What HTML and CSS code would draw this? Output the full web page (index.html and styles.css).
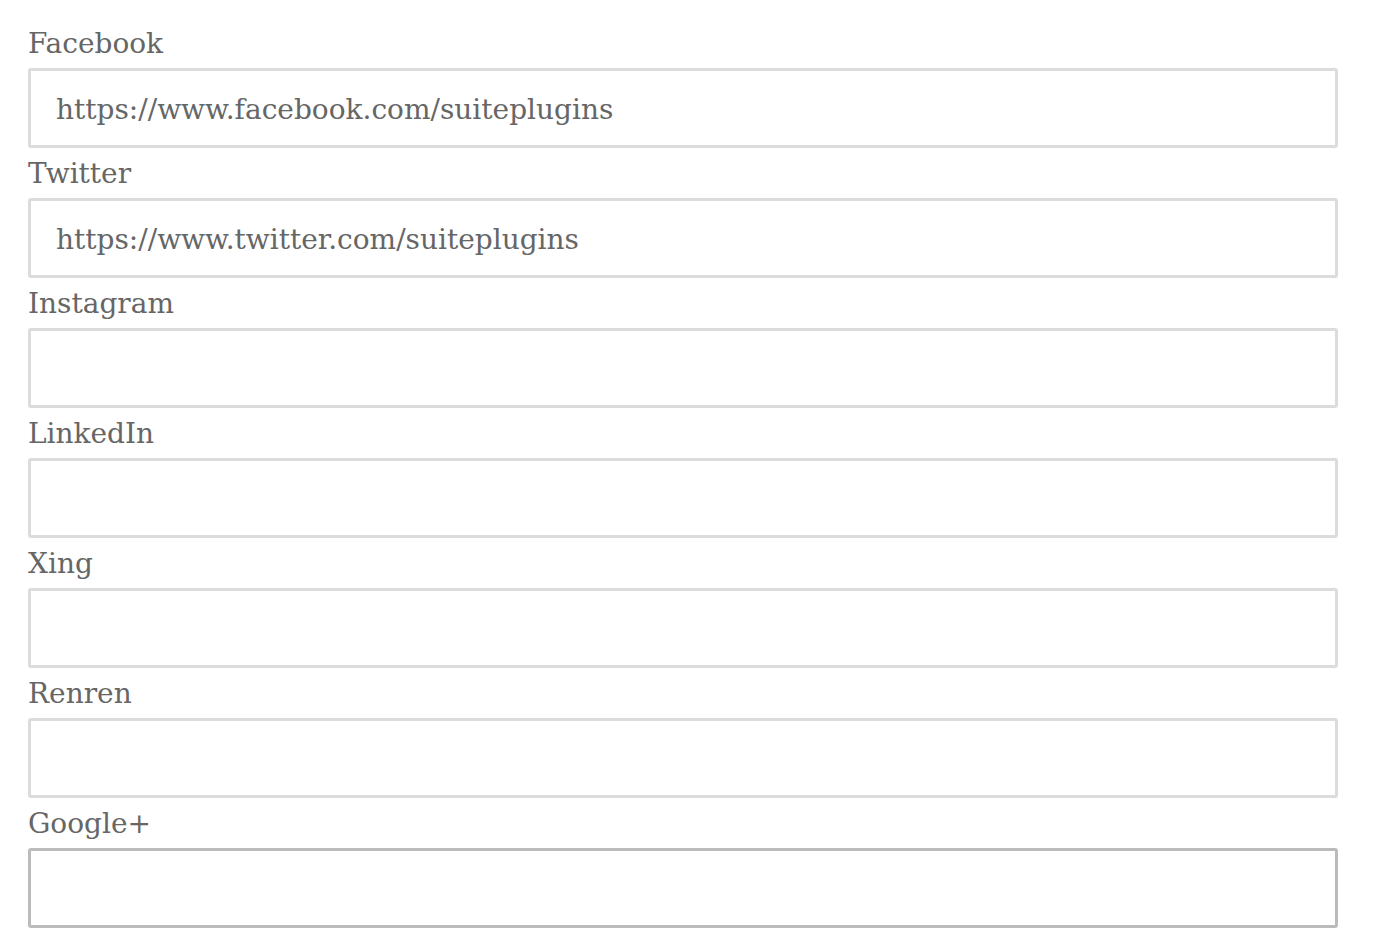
FILE: index.html
```html
<!DOCTYPE html>
<html lang="en">
<head>
<meta charset="utf-8">
<title>Social profiles</title>
<link rel="stylesheet" href="styles.css">
</head>
<body>
<form class="social-form">
  <div class="field">
    <label class="field-label" for="f-facebook">Facebook</label>
    <input class="field-input" id="f-facebook" type="text" value="https://www.facebook.com/suiteplugins">
  </div>
  <div class="field">
    <label class="field-label" for="f-twitter">Twitter</label>
    <input class="field-input" id="f-twitter" type="text" value="https://www.twitter.com/suiteplugins">
  </div>
  <div class="field">
    <label class="field-label" for="f-instagram">Instagram</label>
    <input class="field-input" id="f-instagram" type="text" value="">
  </div>
  <div class="field">
    <label class="field-label" for="f-linkedin">LinkedIn</label>
    <input class="field-input" id="f-linkedin" type="text" value="">
  </div>
  <div class="field">
    <label class="field-label" for="f-xing">Xing</label>
    <input class="field-input" id="f-xing" type="text" value="">
  </div>
  <div class="field">
    <label class="field-label" for="f-renren">Renren</label>
    <input class="field-input" id="f-renren" type="text" value="">
  </div>
  <div class="field">
    <label class="field-label" for="f-google">Google+</label>
    <input class="field-input field-input--active" id="f-google" type="text" value="">
  </div>
  <div class="field">
    <label class="field-label" for="f-behance">Behance</label>
    <input class="field-input" id="f-behance" type="text" value="">
  </div>
</form>
</body>
</html>
```

FILE: styles.css
```css
html, body {
  margin: 0;
  padding: 0;
  background: #ffffff;
}

.social-form {
  display: flex;
  flex-direction: column;
  padding: 18px 0 0 28px;
  width: 1310px;
  font-family: "DejaVu Serif", "Liberation Serif", serif;
  color: #666666;
}

.field {
  display: flex;
  flex-direction: column;
}

.field-label {
  display: block;
  height: 50px;
  line-height: 52px;
  font-size: 28px;
  color: #666666;
}

.field-input {
  box-sizing: border-box;
  width: 1310px;
  height: 80px;
  margin: 0;
  padding: 2px 25px 0;
  border: 3px solid #dcdcdc;
  border-radius: 3px;
  background: #ffffff;
  font-family: inherit;
  font-size: 28px;
  color: #666666;
  outline: none;
}

.field-input--active {
  border-color: #bbbbbb;
}
```
